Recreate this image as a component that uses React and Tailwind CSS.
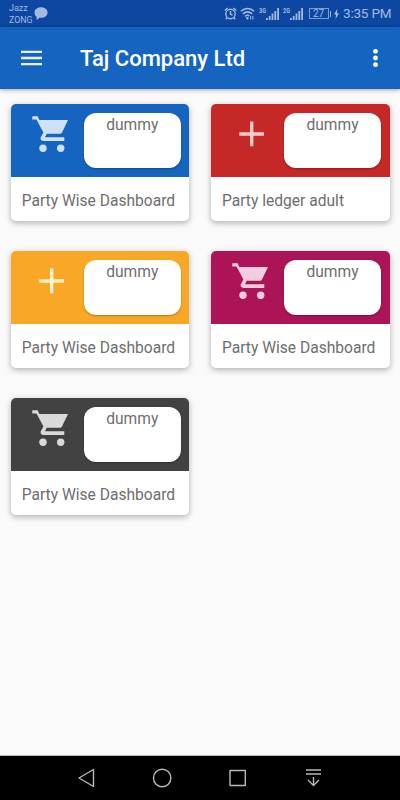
const cards = [
  { id: 1, label: "Party Wise Dashboard", icon: CartIcon, header: "bg-[#1565c0]", tint: "text-[#d0e1f7]" },
  { id: 2, label: "Party ledger adult", icon: PlusIcon, header: "bg-[#c62828]", tint: "text-[#f6c9cd]" },
  { id: 3, label: "Party Wise Dashboard", icon: PlusIcon, header: "bg-[#f9a825]", tint: "text-[#fff0cf]" },
  { id: 4, label: "Party Wise Dashboard", icon: CartIcon, header: "bg-[#ad1457]", tint: "text-[#f4cce0]" },
  { id: 5, label: "Party Wise Dashboard", icon: CartIcon, header: "bg-[#424242]", tint: "text-[#d9d9d9]" },
];

function CartIcon({ className }) {
  return (
    <svg className={className} viewBox="0 0 42 42" fill="currentColor">
      <path d="M2.3 4.3h5.4L9.3 8H38l-6 12.6q-.6 1.2-2 1.2H16.7L15 25.3h19.3V29H14.200c-3.100 0-4.300-2-3.300-4l2.500-4.600L6.500 7.600H2.3z" />
      <circle cx="13" cy="36.3" r="3.7" />
      <circle cx="30.700" cy="36.3" r="3.7" />
    </svg>
  );
}

function PlusIcon({ className }) {
  return (
    <svg className={className} viewBox="0 0 42 42" stroke="currentColor" strokeWidth="3.4">
      <path d="M9.300 22h24.700M21.700 9.600v24.700" />
    </svg>
  );
}

function Signal({ type }) {
  return (
    <div className="flex h-3 w-[21px] items-start">
      <span className="w-[7px] origin-left scale-x-[0.7] text-[8px] leading-[6px] font-bold">{type}</span>
      <svg className="h-3 w-[13px]" viewBox="0 0 13 12" fill="currentColor">
        <path d="M0 10h1.8v2H0zM2.8 8h1.8v4H2.8zM5.6 5.5h1.8V12H5.6zM8.4 3h1.8v9H8.4zM11.2 0H13v12h-1.8z" />
      </svg>
    </div>
  );
}

function StatusBar() {
  return (
    <div className="flex h-[27px] justify-between bg-[#0d47a1] pr-[9px] pl-[9px] text-[#a3b9e3]">
      <div className="flex">
        <div className="w-[25px] pt-[2px] text-[9px] leading-[12px] whitespace-nowrap">
          <p>Jazz</p>
          <p className="text-[8.8px]">ZONG</p>
        </div>
        <svg className="mt-[7px] h-[13px] w-[14px]" viewBox="0 0 14 13" fill="currentColor">
          <path d="M7 .3c3.8 0 6.6 2.3 6.6 5.2S10.8 10.8 7 10.8c-.6 0-1.1 0-1.6-.1C4.6 11.7 3.5 12.5 2.2 12.8c.4-.9.6-1.9.5-2.9C1.2 8.900.5 7.400.5 5.600.5 2.600 3.300.3 7 .3z" />
        </svg>
      </div>
      <div className="flex items-center">
        <svg className="mr-[3px] h-[13px] w-[13px]" viewBox="0 0 13 13" fill="none" stroke="currentColor" strokeWidth="1.4">
          <circle cx="6.5" cy="7" r="4.7" />
          <path d="M6.5 4v3.2l2 1M.8 3.5 3.6 1M12.2 3.5 9.4 1M3 10.8l-1.2 1.5M10 10.8l1.2 1.5" />
        </svg>
        <svg className="mr-[4px] h-[13px] w-[15px]" viewBox="0 0 15 13" fill="none" stroke="currentColor" strokeWidth="1.5">
          <path d="M.8 4.300c3.900-3.700 9.500-3.700 13.400 0M2.900 6.900c2.800-2.500 6.400-2.500 9.200 0M5 9.400c1.500-1.300 3.200-1.300 4.400-.3" />
          <circle cx="7.3" cy="11.3" r="1.2" fill="currentColor" stroke="none" />
          <path d="M10.7 9v3.5M12.9 9v3.5" strokeWidth="1" />
        </svg>
        <Signal type="3G" />
        <div className="w-[3px]" />
        <Signal type="2G" />
        <div className="ml-[5px] flex h-[11px] w-5 items-center justify-center border border-[#7f9bd3] text-[10px] leading-none">
          27
        </div>
        <div className="ml-px h-[6px] w-[1.5px] bg-[#a3b9e3]" />
        <svg className="ml-[3px] h-[10px] w-[5px]" viewBox="0 0 5 10" fill="currentColor">
          <path d="M3.2 0 0 5.500h2L1.6 10 5 4.200H3z" />
        </svg>
        <span className="ml-1 w-12 pt-px text-[13.5px] leading-none tracking-[-0.2px] whitespace-nowrap">3:35 PM</span>
      </div>
    </div>
  );
}

function AppBar() {
  return (
    <header className="flex h-[62px] items-center bg-[#1565c0] pr-[22px] pl-[21px] text-white shadow-[0_1px_4px_rgba(0,0,0,0.35)]">
      <button>
        <svg className="h-4 w-[21px]" viewBox="0 0 21 16" stroke="#e6f3ff" strokeWidth="2.4">
          <path d="M0 1.9h21M0 8h21M0 14.1h21" />
        </svg>
      </button>
      <h1 className="ml-[38px] flex-1 pt-[2px] text-[22px] leading-none font-medium">Taj Company Ltd</h1>
      <button>
        <svg className="h-5 w-[5px]" viewBox="0 0 5 20" fill="#fff">
          <circle cx="2.5" cy="3.3" r="2.4" />
          <circle cx="2.5" cy="10" r="2.4" />
          <circle cx="2.5" cy="16.7" r="2.4" />
        </svg>
      </button>
    </header>
  );
}

function DashboardCard({ card }) {
  const Icon = card.icon;
  return (
    <div className="h-[117px] overflow-hidden rounded-[5px] bg-white text-[#6e6e6e] shadow-[0_2px_6px_rgba(0,0,0,0.3)]">
      <div className={`flex h-[73px] pt-[9px] pr-[8.5px] pl-[19.5px] ${card.header}`}>
        <Icon className={`-mt-px size-[42px] ${card.tint}`} />
        <div className="ml-[11.7px] h-[55px] flex-1 rounded-[12px] bg-white pt-[2px] text-center text-[15.6px] leading-5 shadow-[0_1px_2px_rgba(0,0,0,0.3)]">
          dummy
        </div>
      </div>
      <p className="pt-[14px] pl-[11.2px] text-[15.6px] leading-5 whitespace-nowrap">{card.label}</p>
    </div>
  );
}

function NavBar() {
  return (
    <nav className="h-[45px] border-t border-[#b5bdb9] bg-black">
      <svg className="h-11 w-full" viewBox="0 0 400 44" fill="none" stroke="#b9b9b9" strokeWidth="1.4" strokeLinejoin="round">
        <path d="M93.5 13.5v17L79 22z" />
        <circle cx="162.2" cy="22" r="8.7" />
        <rect x="230" y="14.5" width="15.3" height="15" />
        <path d="M306 14h15M306 18h15M313.5 21v8.5M308 24l5.5 5.5L319 24" />
      </svg>
    </nav>
  );
}

export default function App() {
  return (
    <div className="flex h-[800px] w-[400px] flex-col bg-[#fafafa] font-[Roboto,sans-serif]">
      <StatusBar />
      <AppBar />
      <main className="flex-1 px-[10.5px] pt-[15px]">
        <div className="grid grid-cols-2 gap-x-[21.5px] gap-y-[30px]">
          {cards.map((card) => (
            <DashboardCard key={card.id} card={card} />
          ))}
        </div>
      </main>
      <NavBar />
    </div>
  );
}
